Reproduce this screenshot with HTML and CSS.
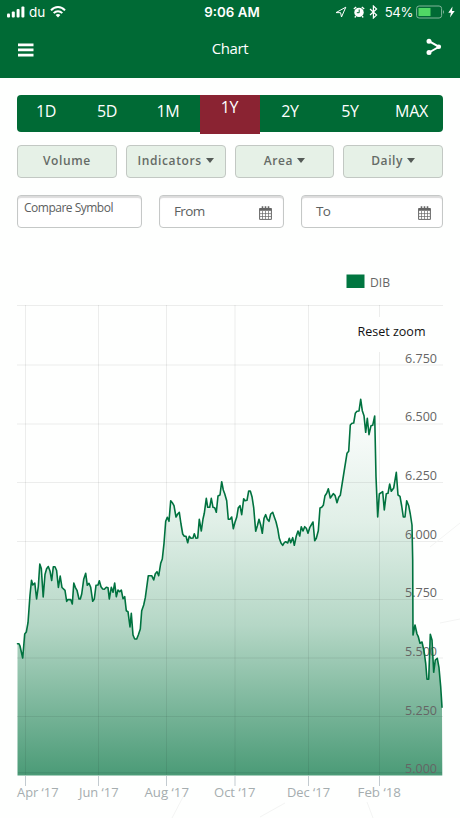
FILE: index.html
```
<!DOCTYPE html>
<html lang="en">
<head>
  <meta charset="UTF-8">
  <title>Chart</title>
  <meta name="viewport" content="width=device-width, initial-scale=1">
  <link rel="stylesheet" href="styles.css">
</head>
<body>
  <header>
    <div class="status">
      <div class="status-left">
        <svg width="18" height="12" viewBox="0 0 18 12" fill="#fff">
          <rect x="0" y="7.5" width="3" height="4" rx="1"/><rect x="4.8" y="5.5" width="3" height="6" rx="1"/>
          <rect x="9.6" y="3" width="3" height="8.5" rx="1"/><rect x="14.4" y="0.5" width="3" height="11" rx="1"/>
        </svg>
        <span class="carrier">du</span>
        <svg width="16" height="12" viewBox="0 0 16 12" fill="none" stroke="#fff" stroke-width="2">
          <path d="M1 4.3C5-.1 11-.1 15 4.3M3.7 7.1c2.5-2.6 6.1-2.6 8.6 0"/><path d="M5.6 8.9c1.5-1.2 3.3-1.2 4.8 0L8 11.5z" fill="#fff" stroke="none"/>
        </svg>
      </div>
      <div class="time">9:06 AM</div>
      <div class="status-right">
        <svg width="12" height="12" viewBox="0 0 12 12" fill="none" stroke="#fff" stroke-width="1"><path d="M1 6.6 10.8 1.2 6.5 11 5.6 6.7z"/></svg>
        <svg width="12" height="12" viewBox="0 0 12 12"><circle cx="6" cy="6.4" r="4.7" fill="#fff"/><path d="M.8 3 3.2 1M11.2 3 8.8 1M2.8 10.2l-1 1.3M9.2 10.2l1 1.3" stroke="#fff" stroke-width="1.3"/><path d="M6.2 3.5v3.2H3.8" fill="none" stroke="#006a35" stroke-width="1"/></svg>
        <svg width="9" height="14" viewBox="0 0 9 14" fill="none" stroke="#fff" stroke-width="1.2"><path d="M1 4 7.6 10 4.4 13V1l3.2 3L1 10"/></svg>
        <span class="percent">54%</span>
        <svg width="30" height="14" viewBox="0 0 30 14"><rect x=".6" y="1" width="25" height="12" rx="2.5" fill="none" stroke="#82b59b"/><rect x="2.5" y="3" width="12" height="8" fill="#50d865"/><path d="M27 5q2 2 0 4z" fill="#82b59b"/></svg>
        <svg width="7" height="12" viewBox="0 0 7 12" fill="#fff"><path d="M4.5.5.3 6.7h2.6L2 11.5 6.7 5H4z"/></svg>
      </div>
    </div>
    <div class="nav">
      <svg width="16" height="14" viewBox="0 0 16 14" fill="#fff"><path d="M0 .5h15.5v2.7H0zM0 5.6h15.5v2.7H0zM0 10.7h15.5v2.7H0z"/></svg>
      <h1>Chart</h1>
      <svg width="16" height="18" viewBox="0 0 16 18" fill="#fff" stroke="#fff" stroke-width="2"><path d="M3 3.2 13 8.8 3 14.5" fill="none"/><circle cx="3" cy="3.2" r="1.5"/><circle cx="12.8" cy="8.8" r="1.3"/><circle cx="3" cy="14.5" r="1.5"/></svg>
    </div>
  </header>

  <main>
    <div class="ranges">
      <a>1D</a><a>5D</a><a>1M</a><a class="active">1Y</a><a>2Y</a><a>5Y</a><a>MAX</a>
    </div>

    <div class="options">
      <button>Volume</button>
      <button>Indicators<i class="caret"></i></button>
      <button>Area<i class="caret"></i></button>
      <button>Daily<i class="caret"></i></button>
    </div>

    <div class="fields">
      <div class="field compare"><span>Compare Symbol</span></div>
      <div class="field"><span>From</span>
        <svg width="13" height="14" viewBox="0 0 13 14" fill="none" stroke="#666"><path d="M.6 2.5h11.8v10.9H.6z"/><path d="M.6 3.6h11.8" stroke-width="2.4"/><path d="M3.5.3v3M6.5.3v3M9.5.3v3" stroke-width="1.6"/><path d="M3.5 5v8M6.5 5v8M9.5 5v8M1 7.6h11M1 10.5h11" stroke-width=".7"/></svg>
      </div>
      <div class="field"><span>To</span>
        <svg width="13" height="14" viewBox="0 0 13 14" fill="none" stroke="#666"><path d="M.6 2.5h11.8v10.9H.6z"/><path d="M.6 3.6h11.8" stroke-width="2.4"/><path d="M3.5.3v3M6.5.3v3M9.5.3v3" stroke-width="1.6"/><path d="M3.5 5v8M6.5 5v8M9.5 5v8M1 7.6h11M1 10.5h11" stroke-width=".7"/></svg>
      </div>
    </div>
  </main>

  <svg class="chart" width="460" height="568" viewBox="0 250 460 568">
    <defs>
      <linearGradient id="fade" gradientUnits="userSpaceOnUse" x1="0" y1="400" x2="0" y2="775">
        <stop offset="0" stop-color="#fff"/>
        <stop offset=".33" stop-color="#e0efe7"/>
        <stop offset=".6" stop-color="#b5d7c6"/>
        <stop offset="1" stop-color="#4b9b77"/>
      </linearGradient>
    </defs>

    <!-- legend -->
    <rect x="346.500" y="274.500" width="18" height="13.500" fill="#007640"/>
    <text class="legend" x="370" y="287" textLength="20" lengthAdjust="spacingAndGlyphs">DIB</text>

    <path class="area" fill="url(#fade)"/>

    <!-- grid -->
    <path class="grid" d="M17 305.500H443M17 365H443M17 424H443M17 482.500H443M17 541.500H443M17 599.500H443M17 658H443M17 716.500H443"/>
    <path class="grid" d="M25.500 305V775M98.500 305V775M166.500 305V775M235 305V775M308.500 305V775M379.500 305V317M379.500 352V775"/>
    <path class="axis" d="M18 772.800H442"/>
    <path class="tick" d="M25.500 776v10M98.500 776v10M166.500 776v10M235 776v10M308.500 776v10M379.500 776v10"/>

    <!-- y labels -->
    <g class="ylabels"></g>
    <polyline class="line" points="17.500,643.700 19,643.700 20,646 22.700,658 24.700,634 26.300,632 28,622.700 30,595 31.500,580.300 32.800,585 34.800,583 36.600,599 38.300,586.500 39.800,564 41.300,568.500 43.200,597 45,574.500 46.600,568.800 48.300,566.500 50,571 51.700,580.500 53.300,566.800 55,566.800 56.600,570.500 58.400,587.500 60.200,576 62,587.500 65,590.300 66.700,601.500 67.700,599.600 70.700,599.600 72.300,604 73.800,583
      75.300,587.300 77,590.300 79,599 80.300,599 81.700,594 83.700,579.300 85.700,573.300 87.300,585.300 89,583.300 90.700,587.300 92.700,601.300 94.300,599 96,585.300 98,585 99.300,580.700 101,586.700 102.700,589 104.300,589.300 106.300,587.300 108,587.700 109.300,599 111.300,587.300 113,592.300 114.700,583 116.300,596.700 118,590 119.700,591.700 121.300,590 123,598.700 124.700,596.700 126.300,610.700 128,611.700
      130,627 131.300,613.300 133,635 134.700,639 136.700,639 138.300,635 140.300,629 141.700,610.700 143.700,605 145.300,597.700 148.300,575.700 151.700,575.700 153.700,580 155.300,573.700 157,571.700 158.700,575.700 160.700,563.300 162.300,559 164,543.300 165.700,521.300 167.300,517.300 169,521.300 170.700,500.700 172.300,502.700 174,505.700 176,517 177.700,514 179.300,512.300 181,524 182.700,534 184.300,536.300 186,536.300 187.700,542.700 189.300,536.300 191,538.300 193,538 194.300,533.700 196,538.300 197.700,538 199.300,519.300 201.300,531 203,519 204.300,513.300 206.300,498.300 207.700,507.300 209.700,507.300 211.300,498.300 213,507.300 214.700,507.700 216.300,512.300 218,496 220,495 221.700,481.700 223.300,490 224.700,493.700 226.700,500.700 228.300,519.300 230,519.300 231.700,517 233.300,528.700 235,522.300 236.700,517.300 238.300,507.700 240,505.700 241.700,514.700 243.700,498.700 245,500.700 247,500.300 248.700,491 250.300,491 252,496.700 253.700,507.700 255.700,531.300 257.300,526 259,519.300 260.700,525 262.300,533.300 264,518.300 265.700,514.700 267.300,519.300 269,521.300 270.700,514 272.700,512.300 274.300,517 276,521.700 277.700,528.700 279.300,538.300 281,543 282.700,545.300
      284.300,542.700 285.700,541.700 287.700,543 289.300,538.300 290.700,542.700 292.700,537.700 294.300,545.300 296.300,536 298,531 299.700,536 301.300,526.700 303,531 304.700,526.700 306.300,528.300 308,533.300 309.700,527.700 313,522 314.700,540.700 316.300,538.300 318.300,530.700 320,508 321.700,507.300 323.300,505.300 325,495.700 326.700,493.300 328.300,488.700 330.300,498 333.300,493.700 335,495.300 337,502.700 338.700,497.300 340.300,495.300 343.700,474 347,453.300 348.700,451.300 350.300,425 352,423.300 353.700,423 355.300,413.300 357,411.300 359,411 360.700,399.300 362.300,410.700 364,415.700 365.700,432.300 367.300,418.300 369,434.700 371,425.700 372.700,425.300 374.700,416 376,476.700 377.700,517 379.300,494 382.700,491.700 384.300,510 386.300,493.700 388,493.300 389.700,484 391.300,491.300 393.700,488 396.300,472.300 398,495 400,496.300 401.700,506 403.300,517 405,517 406.700,500.700 408.700,505.700 410.300,514 412,525 412.700,560
      413,635 415,625 417,634 418.300,636.700 420,643.300 422,642 424,651 425.700,663.300 427,679.300 428.700,679.300 430.300,634.300 432,640 433.700,672.300 435.300,660 437.300,658.300 439,667.700 440.700,686.700 442,707.300"/>

    <text class="reset" x="357.500" y="336" textLength="68" lengthAdjust="spacingAndGlyphs">Reset zoom</text>

    <!-- x labels -->
    <g class="xlabels">
      <text x="17" y="796.500" textLength="41.500" lengthAdjust="spacingAndGlyphs">Apr ‘17</text>
      <text x="79" y="796.500" textLength="39.500" lengthAdjust="spacingAndGlyphs">Jun ‘17</text>
      <text x="144.500" y="796.500" textLength="44.500" lengthAdjust="spacingAndGlyphs">Aug ‘17</text>
      <text x="214" y="796.500" textLength="41.500" lengthAdjust="spacingAndGlyphs">Oct ‘17</text>
      <text x="287" y="796.500" textLength="43" lengthAdjust="spacingAndGlyphs">Dec ‘17</text>
      <text x="357.500" y="796.500" textLength="43.500" lengthAdjust="spacingAndGlyphs">Feb ‘18</text>
    </g>
    <path class="crease" d="M183 797 172 818M367 802 373 818M260 817 285 803M430 547 460 523M440 623 460 619"/>
  </svg>

  <script>
    // close the line down to the baseline to get the filled area
    const points = document.querySelector('.line').getAttribute('points').trim().replace(/\s+/g, ' L');
    document.querySelector('.area').setAttribute('d', 'M17.5,775.5 L' + points + ' L442.3,775.5 Z');

    // price labels, one for each grid line
    const labels = document.querySelector('.ylabels');
    for (let i = 0; i < 8; i++) {
      const t = document.createElementNS('http://www.w3.org/2000/svg', 'text');
      t.setAttribute('x', 405);
      t.setAttribute('y', 362.5 + i * 58.7);
      t.setAttribute('textLength', 32);
      t.setAttribute('lengthAdjust', 'spacingAndGlyphs');
      t.textContent = (6.75 - i * 0.25).toFixed(3);
      labels.appendChild(t);
    }
  </script>
</body>
</html>
```
FILE: styles.css
```
* { box-sizing: border-box; }
body { margin: 0; width: 460px; height: 818px; overflow: hidden; background: #fefffe;
  font-family: "Open Sans", "Noto Sans", sans-serif; color: #5c6060; }
svg { display: block; flex: none; }
header { height: 78px; background: #006a35; color: #fff; }

.status { display: grid; grid-template-columns: 1fr auto 1fr; align-items: center; height: 24px;
  padding: 0 5px 0 7px; font-family: Inter, "Liberation Sans", sans-serif; font-size: 14px; }
.status-left, .status-right { display: flex; align-items: center; }
.status-right { justify-content: flex-end; }
.carrier { margin: 0 5px 0 4px; font-size: 13.5px; line-height: 22px; }
.time { font-weight: 600; font-size: 13.3px; padding-left: 2px; }
.status-right svg:nth-child(2) { margin-left: 6px; }
.status-right svg:nth-child(3) { margin-left: 4px; }
.percent { margin: 0 3px 0 7px; font-size: 13.2px; letter-spacing: -0.4px; }
.status-right svg:last-child { margin-left: 2px; }

.nav { display: grid; grid-template-columns: 1fr auto 1fr; height: 48px; align-items: center; padding: 0 18px; }
.nav h1 { margin: 0; font-size: 15px; font-weight: 400; line-height: 20px; letter-spacing: -0.4px; }
.nav svg:first-child { margin-top: 4px; }
.nav svg:last-child { justify-self: end; margin-top: -2px; }

main { padding: 17px 17px 0; }
.ranges { display: grid; grid-template-columns: 61px 61px 61px 60px 60px 60px 63px; height: 37px;
  background: #006a35; border-radius: 4px; color: #fff; font-size: 16px; letter-spacing: -0.3px; }
.ranges a { line-height: 33px; text-align: center; padding-right: 3px; }
.ranges a:nth-child(n+5) { padding-right: 0; }
.ranges .active { height: 39px; background: #8a2332; line-height: 25px; padding: 0 1px 0 0; }

.options { display: grid; grid-template-columns: repeat(4, 1fr); gap: 9px; margin-top: 13px; }
.options button { display: flex; align-items: center; justify-content: center; height: 33px; padding: 0 0 2px;
  background: #e6f1e7; border: 1px solid #c2c8c3; border-radius: 4px;
  font: 600 12px/18px "Open Sans", sans-serif; letter-spacing: 0.6px; color: #656b66; }
.caret { margin-left: 4px; border: 4px solid transparent; border-top: 5px solid #555b57; border-bottom: 0; }

.fields { display: grid; grid-template-columns: 125px 125px 142px; gap: 17px; margin-top: 17px; }
.field { display: flex; align-items: center; justify-content: space-between; height: 33px; padding: 0 11px 1px 14px;
  background: #fff; border: 1px solid #c5c8c7; border-radius: 4px; box-shadow: inset 0 2px 1px #dcdcdc;
  font-size: 13.5px; letter-spacing: -0.6px; }
.field svg { margin-top: 3px; }
.compare { align-items: flex-start; padding: 4px 6px; font-size: 12px; line-height: 16px; letter-spacing: -0.5px; white-space: nowrap; }

.chart { margin-top: 22px; }
.chart text { font-size: 13.5px; }
.legend { fill: #666; }
.grid { fill: none; stroke: #000; stroke-opacity: 0.07; }
.axis { stroke: #34735a; stroke-opacity: 0.4; }
.tick { stroke: #c3cbd0; }
.line { fill: none; stroke: #00723f; stroke-width: 1.6; stroke-linejoin: round; stroke-linecap: round; }
.ylabels { fill: #656565; }
.xlabels { fill: #a5adaf; }
.reset { fill: #111; }
.crease { fill: none; stroke: #f3f4f3; }
```
